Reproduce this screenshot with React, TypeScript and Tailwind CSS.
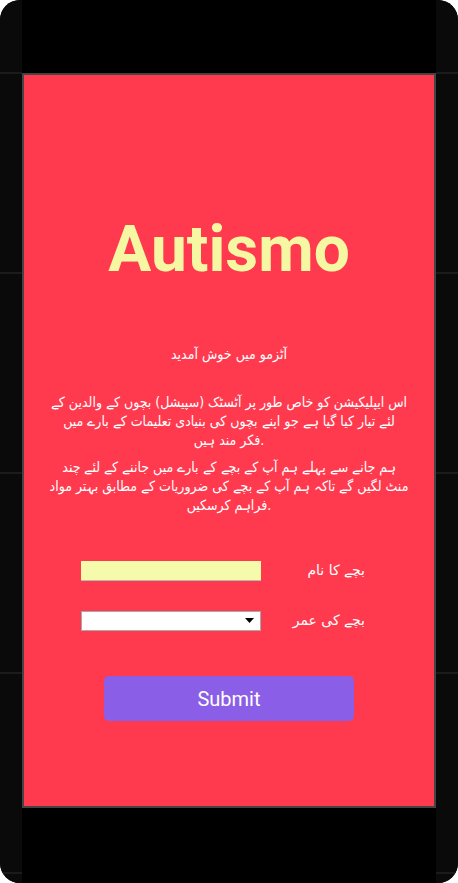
import React from "react";

function Side() {
  return (
    <div className="w-[22px] h-full bg-[#0a0a0a] bg-[linear-gradient(to_bottom,transparent_72px,#1b1b1b_72px,#1b1b1b_74px,transparent_74px)] bg-[length:100%_200px] bg-repeat-y" />
  );
}

export default function App() {
  return (
    <div className="w-[458px] h-[883px] bg-white">
      <div className="w-[458px] h-[883px] rounded-[20px] overflow-hidden flex bg-[#0a0a0a]">
        <Side />
        <div className="w-[414px] h-full bg-black pt-[73px]">
          <div className="h-[735px] border-2 border-[#444444] bg-[#ff3a4f] flex flex-col">
            <h1 className="mt-[143px] text-center text-[64px] leading-[64px] font-bold text-[#f6f7a3] font-['Roboto',sans-serif]">
              Autismo
            </h1>
            <div className="mt-[63px] px-[25px] text-white text-[14px] leading-[19px] text-center font-['DejaVu_Sans_Condensed','DejaVu_Sans',sans-serif]">
              <p>آٹزمو میں خوش آمدید</p>
              <p className="mt-[29px]">
                اس ایپلیکیشن کو خاص طور پر آٹسٹک (سپیشل) بچوں کے والدین کے لئے تیار کیا گیا ہے جو اپنے بچوں کی بنیادی تعلیمات کے بارے میں
                <br />
                فکر مند ہیں.
              </p>
              <p className="mt-[8px]">
                ہم جانے سے پہلے ہم آپ کے بچے کے بارے میں جاننے کے لئے چند منٹ لگیں گے تاکہ ہم آپ کے بچے کی ضروریات کے مطابق بہتر مواد فراہم کرسکیں.
              </p>
            </div>
            <div className="mt-[45px] flex flex-col gap-[29px] font-['DejaVu_Sans',sans-serif]">
              <div className="flex items-center pl-[57px]">
                <div className="w-[180px] h-[20px] bg-[#f5fbaa] border-b border-[#b8b8b8]" />
                <div className="w-[104px] text-right text-white text-[14px]">بچے کا نام</div>
              </div>
              <div className="flex items-center pl-[57px]">
                <div className="w-[180px] h-[20px] bg-white border border-[#a9a9a9] flex items-center justify-end pr-[6px]">
                  <svg width="9" height="5" viewBox="0 0 9 5">
                    <path d="M0 0H9L4.5 5Z" fill="#000" />
                  </svg>
                </div>
                <div className="w-[104px] text-right text-white text-[14px]">بچے کی عمر</div>
              </div>
            </div>
            <button className="mt-[45px] mx-auto w-[250px] h-[45px] rounded-[5px] bg-[#8a5ee6] text-white text-[20px] font-['Roboto',sans-serif]">
              Submit
            </button>
          </div>
        </div>
        <Side />
      </div>
    </div>
  );
}
